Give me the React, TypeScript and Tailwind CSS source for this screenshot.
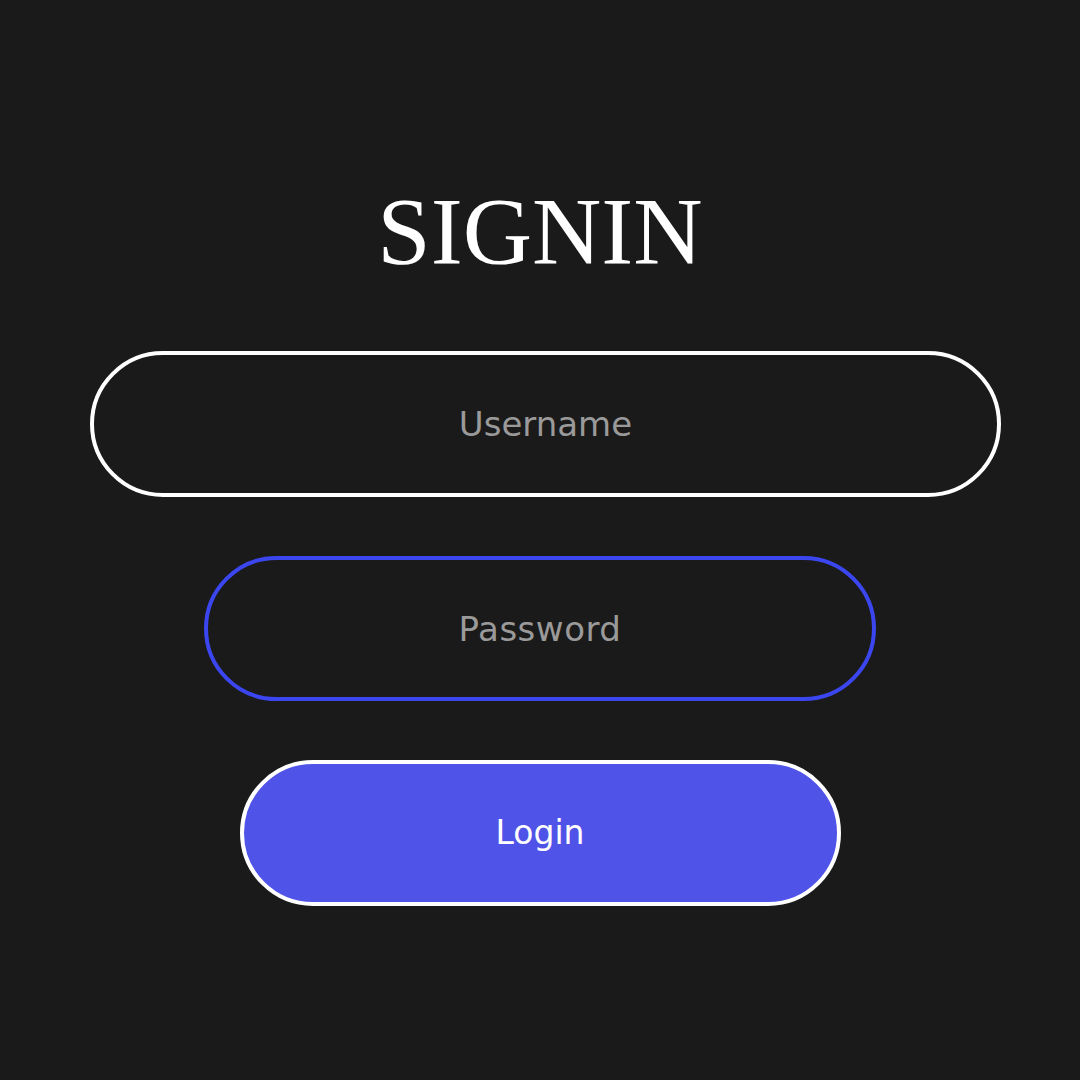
import React, { useState } from 'react';

export default function App() {
  const [username, setUsername] = useState('');
  const [password, setPassword] = useState('');

  return (
    <div className="min-h-screen w-full bg-[#1a1a1a] flex flex-col items-center pt-[184px]">
      <h1 className="text-[96px] leading-none text-white font-['Liberation_Serif',serif]">SIGNIN</h1>

      <form
        className="mt-[71px] flex flex-col items-center gap-[59px] font-['DejaVu_Sans',sans-serif]"
        onSubmit={e => e.preventDefault()}
      >
        <input
          type="text"
          placeholder="Username"
          value={username}
          onChange={e => setUsername(e.target.value)}
          className="ml-[11px] w-[911px] h-[146px] rounded-full border-[4px] border-white bg-[#1a1a1a] text-center text-[34px] text-white placeholder:text-[#9a9a9a] outline-none"
        />
        <input
          type="password"
          placeholder="Password"
          value={password}
          onChange={e => setPassword(e.target.value)}
          className="w-[672px] h-[145px] rounded-full border-[4px] border-[#3b46ee] bg-[#1a1a1a] text-center text-[34px] tracking-[0.5px] text-white placeholder:text-[#9a9a9a] outline-none"
        />
        <button
          type="submit"
          className="w-[601px] h-[146px] rounded-full border-[4px] border-white bg-[#5053e8] text-[33px] text-white"
        >
          Login
        </button>
      </form>
    </div>
  );
}
